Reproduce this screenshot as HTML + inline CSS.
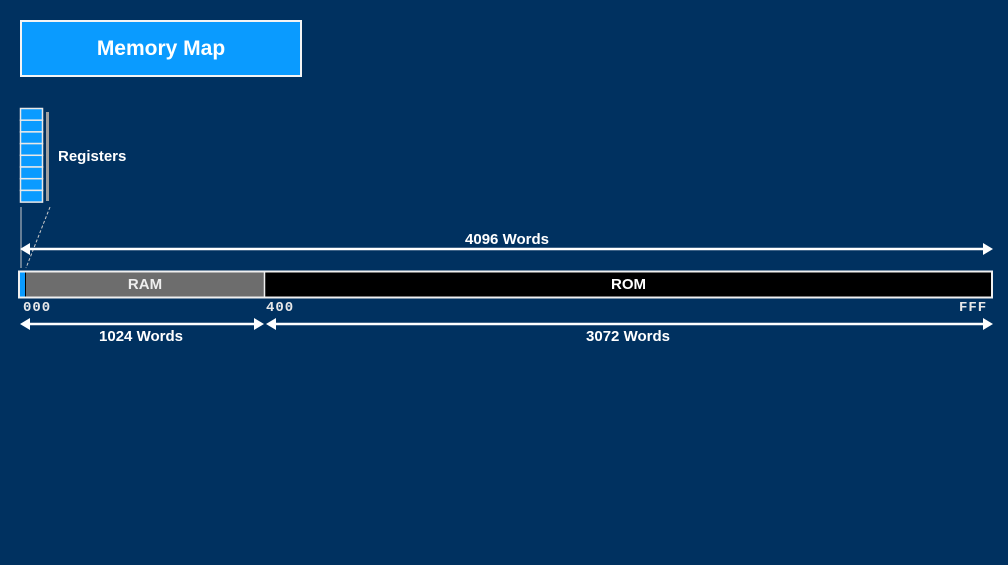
<!DOCTYPE html><html><head><style>
body{margin:0;width:1008px;height:565px;background:#003160;overflow:hidden;position:relative;font-family:"Liberation Sans",sans-serif;color:#fff}
.a{position:absolute}
.t{font-weight:bold}
.m{font-family:"Liberation Mono",monospace;font-weight:bold;font-size:14px;color:#e8e8e8;letter-spacing:1px}
</style></head><body>
<div class="a" style="left:20px;top:20px;width:278px;height:53px;background:#0a9bff;border:2px solid #f4f4f4;"></div>
<div class="a t" style="left:20px;top:37px;width:282px;text-align:center;font-size:21px">Memory Map</div>
<svg class="a" style="left:0;top:0" width="1008" height="565">
<g fill="#0a9bff" stroke="#e8e8e8" stroke-width="1.5">
<rect x="20.5" y="108.5" width="22" height="11.7"/><rect x="20.5" y="120.2" width="22" height="11.7"/><rect x="20.5" y="131.9" width="22" height="11.7"/><rect x="20.5" y="143.6" width="22" height="11.7"/><rect x="20.5" y="155.3" width="22" height="11.7"/><rect x="20.5" y="167" width="22" height="11.7"/><rect x="20.5" y="178.7" width="22" height="11.7"/><rect x="20.5" y="190.4" width="22" height="11.7"/>
</g>
<rect x="46" y="112" width="3" height="89" fill="#a0a0a0"/>
<line x1="21" y1="207" x2="21" y2="268" stroke="#ccc" stroke-width="1"/>
<line x1="50" y1="207" x2="26" y2="268" stroke="#ccc" stroke-width="1" stroke-dasharray="3,2"/>
<rect x="19" y="271.5" width="973" height="26" fill="#000" stroke="#f0f0f0" stroke-width="2"/>
<rect x="20" y="272.5" width="5" height="24" fill="#0a9bff"/>
<rect x="26" y="272.5" width="238" height="24" fill="#6d6d6d"/>
<line x1="264.5" y1="272" x2="264.5" y2="297" stroke="#f0f0f0" stroke-width="1.5"/>
<g stroke="#fff" stroke-width="2.5" fill="#fff">
<line x1="26" y1="249" x2="986" y2="249"/><path d="M20 249 l10 -6 v12z M993 249 l-10 -6 v12z" stroke="none"/>
<line x1="26" y1="324" x2="257" y2="324"/><path d="M20 324 l10 -6 v12z M264 324 l-10 -6 v12z" stroke="none"/>
<line x1="272" y1="324" x2="986" y2="324"/><path d="M266 324 l10 -6 v12z M993 324 l-10 -6 v12z" stroke="none"/>
</g>
</svg>
<div class="a t" style="left:58px;top:148px;font-size:15px">Registers</div>
<div class="a t" style="left:407px;top:231px;width:200px;text-align:center;font-size:15px">4096 Words</div>
<div class="a t" style="left:26px;top:276px;width:238px;text-align:center;font-size:15px;color:#eee">RAM</div>
<div class="a t" style="left:265px;top:276px;width:727px;text-align:center;font-size:15px">ROM</div>
<div class="a m" style="left:23px;top:300px">000</div>
<div class="a m" style="left:266px;top:300px">400</div>
<div class="a m" style="left:959px;top:300px">FFF</div>
<div class="a t" style="left:41px;top:328px;width:200px;text-align:center;font-size:15px">1024 Words</div>
<div class="a t" style="left:528px;top:328px;width:200px;text-align:center;font-size:15px">3072 Words</div>
</body></html>
